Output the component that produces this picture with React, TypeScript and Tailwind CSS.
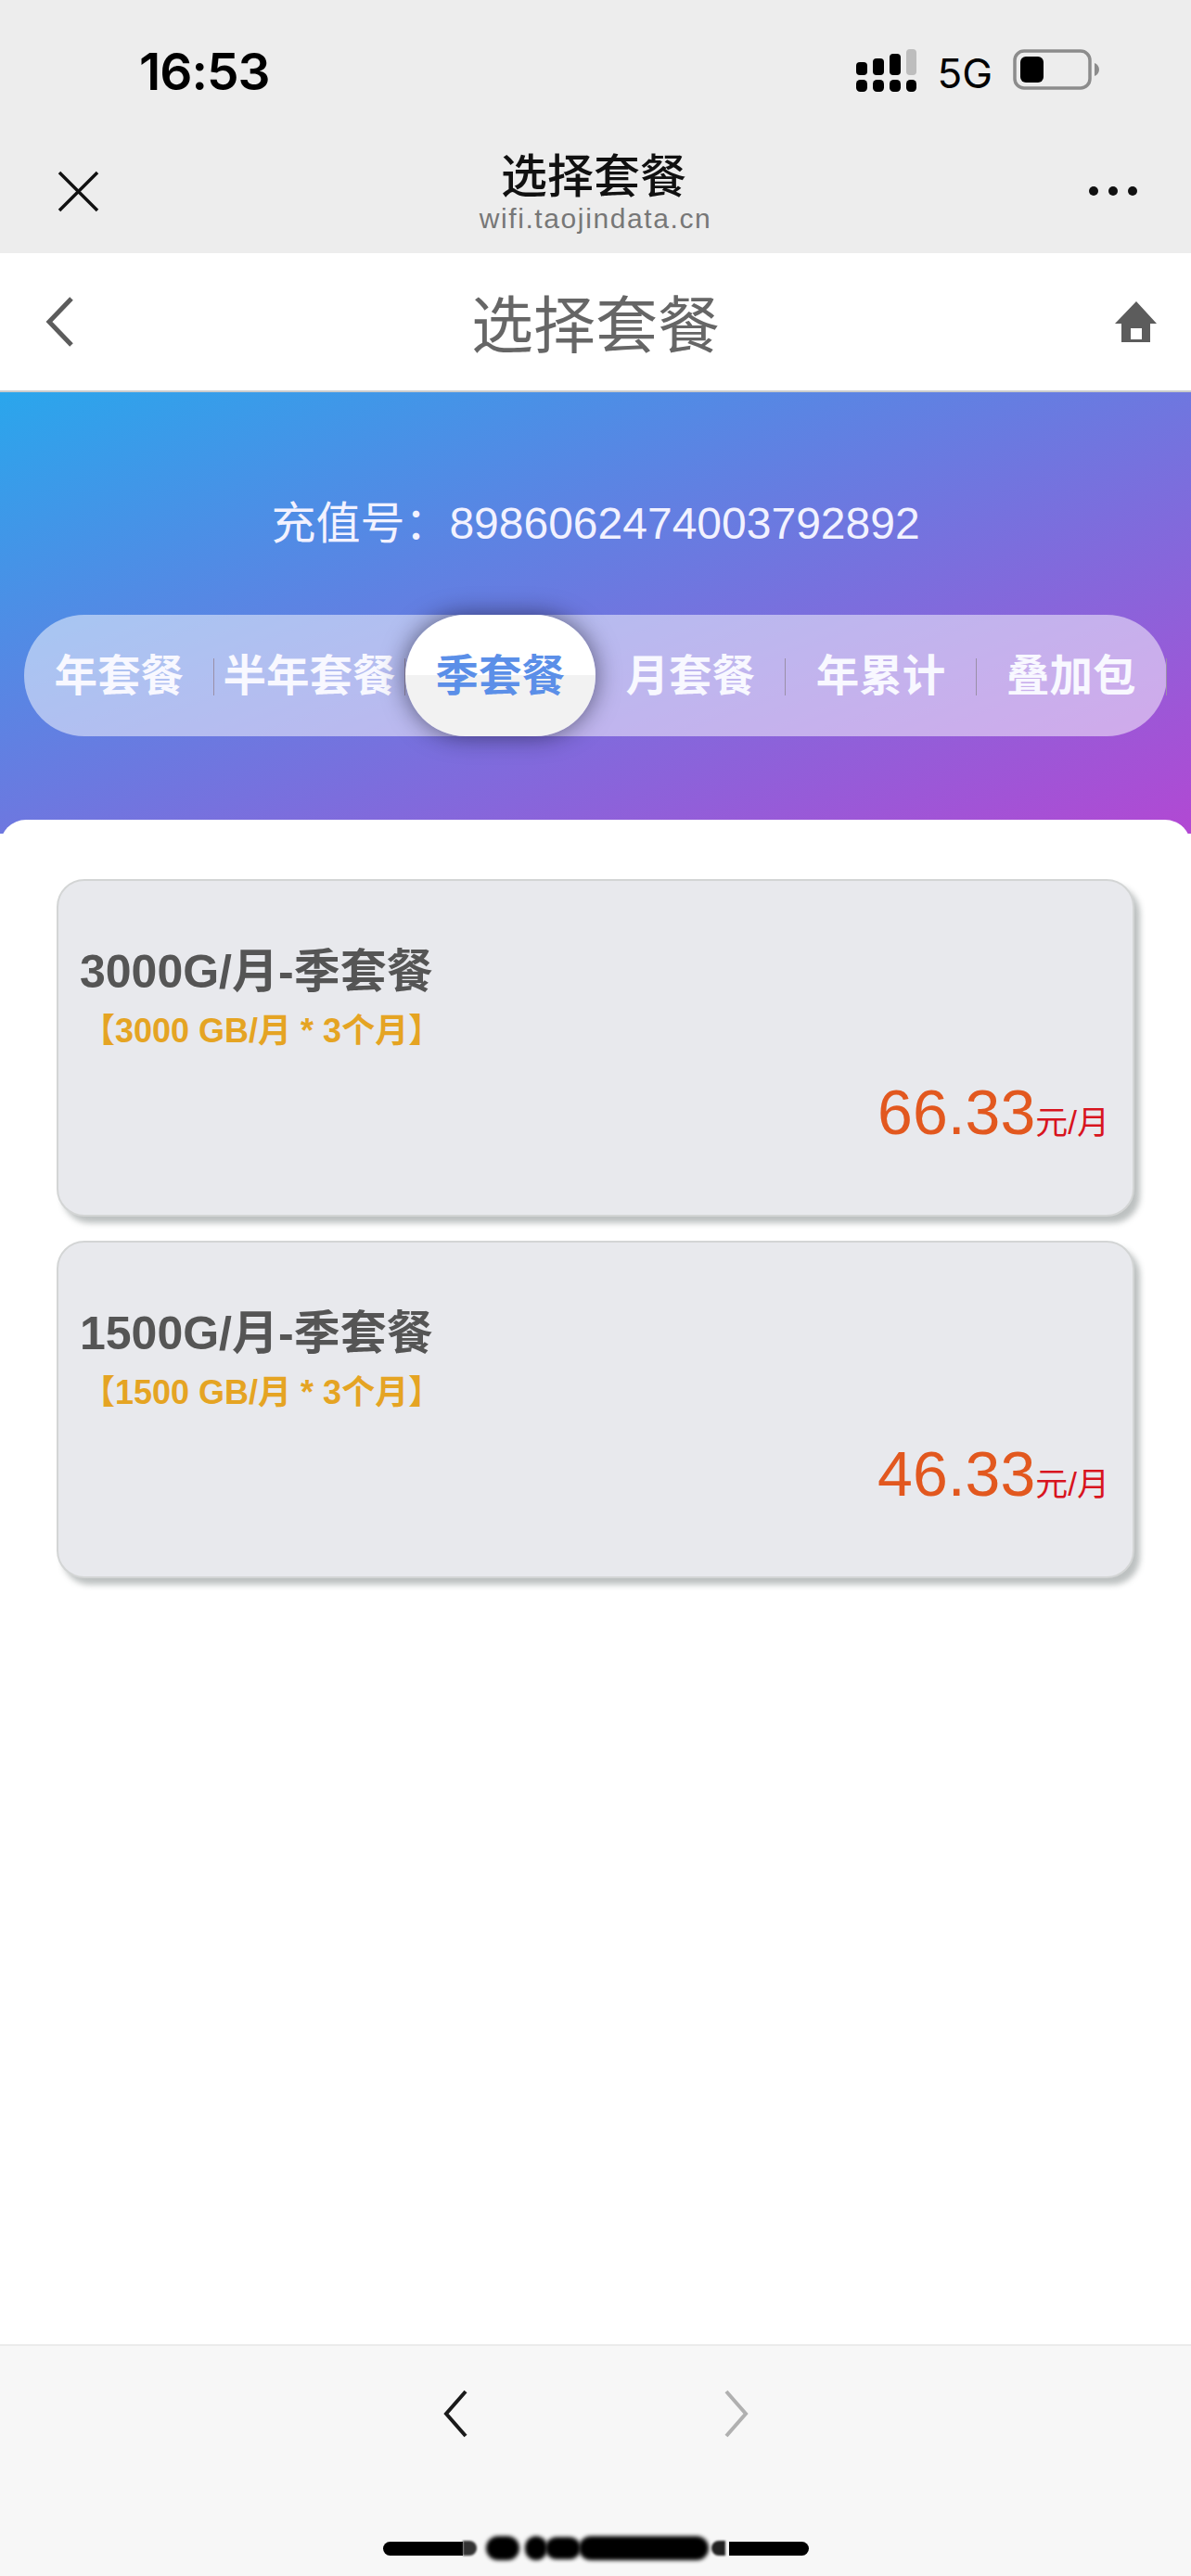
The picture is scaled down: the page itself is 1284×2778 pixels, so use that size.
import React from "react";

const cjk = "font-['Liberation_Sans','Noto_Sans_CJK_SC',sans-serif]";

const tabs = ["年套餐", "半年套餐", "季套餐", "月套餐", "年累计", "叠加包"];

const plans = [
  { title: "3000G/月-季套餐", sub: "【3000 GB/月 * 3个月】", price: "66.33" },
  { title: "1500G/月-季套餐", sub: "【1500 GB/月 * 3个月】", price: "46.33" },
];

const SignalIcon = () => (
  <svg width="66" height="46" viewBox="0 0 66 46">
    <rect x="0" y="14" width="12" height="14" rx="4" fill="#000" />
    <rect x="18" y="10" width="12" height="18" rx="4" fill="#000" />
    <rect x="36" y="5" width="12" height="23" rx="4" fill="#000" />
    <rect x="54" y="0" width="11" height="28" rx="4" fill="#bdbdbd" />
    <rect x="0" y="33" width="12" height="13" rx="4.5" fill="#000" />
    <rect x="18" y="33" width="12" height="13" rx="4.5" fill="#000" />
    <rect x="36" y="33" width="12" height="13" rx="4.5" fill="#000" />
    <rect x="54" y="33" width="11" height="13" rx="4.5" fill="#000" />
  </svg>
);

const BatteryIcon = () => (
  <svg width="94" height="44" viewBox="0 0 94 44">
    <rect x="2" y="2" width="81" height="40" rx="10" fill="none" stroke="#8c8c8c" stroke-width="3.5" />
    <rect x="8" y="8" width="25" height="28" rx="6" fill="#000" />
    <path d="M88 15c3 1 5 4 5 7s-2 6-5 7z" fill="#8c8c8c" />
  </svg>
);

const HomeIcon = () => (
  <svg width="46" height="44" viewBox="0 0 46 44">
    <path d="M23 0 45 24h-7v20H7V24H0z" fill="#5c5c5c" />
    <rect x="17" y="29" width="12" height="12" fill="#fff" />
  </svg>
);

const PlanCard = ({ title, sub, price }: { title: string; sub: string; price: string }) => (
  <div className="h-[364px] rounded-[30px] border-2 border-[#d3d5d5] bg-[#e8e9ed] pl-[23px] pr-[25px] pt-[70px] shadow-[6px_7px_6px_rgba(90,100,100,0.4)]">
    <div className="text-[50px] font-bold leading-[56px] text-[#555555]">{title}</div>
    <div className="ml-[2px] mt-[14px] text-[36px] font-bold leading-[44px] text-[#e5a423]">{sub}</div>
    <div className="mt-[27px] flex items-baseline justify-end">
      <span className="text-[68px] leading-[76px] text-[#e2581f]">{price}</span>
      <span className="text-[35px] text-[#d8141e]">元/月</span>
    </div>
  </div>
);

export default function App() {
  return (
    <div className={`flex h-[2778px] w-[1284px] flex-col overflow-hidden bg-white ${cjk}`}>
      {/* wechat chrome */}
      <div className="h-[273px] bg-[#ededed]">
        <div className="flex h-[160px] items-start justify-between pl-[150px] pr-[98px] pt-[44px]">
          <span className="font-['Inter',sans-serif] text-[55px] font-semibold leading-[66px] tracking-[-1px] text-black">16:53</span>
          <div className="flex items-start pt-[9px]">
            <SignalIcon />
            <span className="ml-[21px] font-['Inter',sans-serif] text-[44px] leading-[52px] text-black">5G</span>
            <div className="ml-[22px]">
              <BatteryIcon />
            </div>
          </div>
        </div>
        <div className="grid grid-cols-[1fr_auto_1fr] items-start px-[58px]">
          <svg className="mt-[20px]" width="52" height="52" viewBox="0 0 52 52">
            <path d="M6 6 47 47M47 6 6 47" stroke="#111" stroke-width="3.5" fill="none" />
          </svg>
          <div className="mt-[2px] flex flex-col items-center">
            <span className="-ml-[4px] text-[50px] font-medium leading-[58px] text-[#111]">选择套餐</span>
            <span className="-mt-[1px] text-[30px] leading-[34px] tracking-[1.6px] text-[#777777]">wifi.taojindata.cn</span>
          </div>
          <div className="mt-[41px] flex justify-end gap-[11px]">
            <span className="h-[10px] w-[10px] rounded-full bg-[#111]" />
            <span className="h-[10px] w-[10px] rounded-full bg-[#111]" />
            <span className="h-[10px] w-[10px] rounded-full bg-[#111]" />
          </div>
        </div>
      </div>

      {/* page header */}
      <div className="grid h-[150px] grid-cols-[1fr_auto_1fr] items-center border-b-2 border-[#c9cbcc] px-[36px]">
        <svg className="ml-[12px]" width="32" height="54" viewBox="0 0 32 54">
          <path d="M29 2 5 27l24 25" stroke="#5c5c5c" stroke-width="5" fill="none" />
        </svg>
        <span className="pt-[10px] text-[67px] leading-[76px] text-[#666666]">选择套餐</span>
        <div className="flex justify-end">
          <HomeIcon />
        </div>
      </div>

      {/* gradient header */}
      <div className="flex h-[476px] shrink-0 flex-col bg-[linear-gradient(to_bottom_right,#2aa6ec,#b248d3)] px-[26px] pt-[112px]">
        <div className="text-center text-[48px] leading-[60px] text-[#f2f2ff]">充值号：8986062474003792892</div>
        <div className="mt-[68px] grid h-[131px] grid-cols-6 rounded-[65px] bg-white/50">
          {tabs.map((tab, index) =>
            index === 2 ? (
              <div
                key={tab}
                className="z-10 flex items-center justify-center whitespace-nowrap rounded-[65px] bg-[linear-gradient(#ffffff_50%,#f2f2f2_50%)] pt-[2px] text-[46.5px] font-bold text-[#5b8fe8] shadow-[0_0_26px_rgba(20,20,40,0.6)]"
              >
                {tab}
              </div>
            ) : (
              <div key={tab} className="flex items-center justify-center whitespace-nowrap pt-[2px] text-[46.5px] font-bold text-[#f8f8ff]">
                <span className="flex h-[40px] w-full items-center justify-center border-r border-[#9a8fa8]">{tab}</span>
              </div>
            ),
          )}
        </div>
      </div>

      {/* plan list */}
      <div className="-mt-[15px] flex flex-1 flex-col gap-[26px] rounded-t-[28px] bg-white px-[61px] pt-[64px]">
        {plans.map((plan) => (
          <PlanCard key={plan.title} {...plan} />
        ))}
        <div className="-mx-[61px] mt-auto flex h-[250px] flex-col border-t-2 border-[#ebebeb] bg-[#f7f7f7]">
          <div className="flex h-[211px] justify-center gap-[277px] pt-[47px]">
            <svg width="26" height="52" viewBox="0 0 26 52">
              <path d="M24 2 3 26l21 24" stroke="#1a1a1a" stroke-width="4" fill="none" />
            </svg>
            <svg width="26" height="52" viewBox="0 0 26 52">
              <path d="M2 2l21 24L2 50" stroke="#b0b0b0" stroke-width="4" fill="none" />
            </svg>
          </div>
          <div className="relative mx-auto h-[15px] w-[459px] rounded-full bg-black">
            {/* smudged watermark over the home bar */}
            <div className="absolute -top-[12px] left-[86px] flex h-[37px] w-[287px] items-center bg-[#f7f7f7]">
              <span className="h-[16px] w-[15px] rounded-r-full bg-[#333] blur-[1px]" />
              <span className="ml-[10px] h-[26px] w-[36px] rounded-full bg-black blur-[2px]" />
              <span className="ml-[6px] h-[26px] w-[24px] rounded-full bg-black blur-[2px]" />
              <span className="-ml-[2px] h-[24px] w-[38px] rounded-full bg-black blur-[2px]" />
              <span className="-ml-[2px] h-[26px] w-[140px] rounded-full bg-black blur-[2px]" />
              <span className="ml-[3px] h-[16px] w-[15px] rounded-l-full bg-[#222] blur-[1px]" />
            </div>
          </div>
        </div>
      </div>
    </div>
  );
}
